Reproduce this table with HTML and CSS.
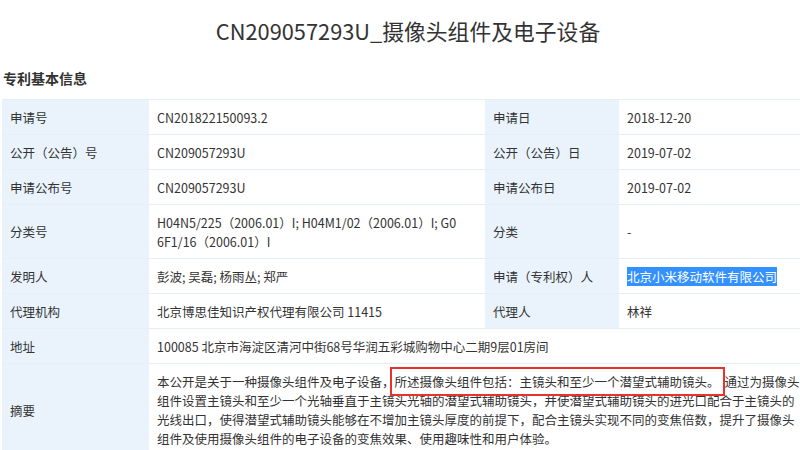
FILE: index.html
```html
<!DOCTYPE html>
<html lang="zh-CN">
<head>
    <meta charset="UTF-8">
    <meta name="viewport" content="width=device-width, initial-scale=1.0">
    <title>CN209057293U_摄像头组件及电子设备</title>
    <link rel="stylesheet" href="styles.css">
</head>
<body>
<div class="page">
    <h1 class="title">CN209057293U_摄像头组件及电子设备</h1>
    <h2 class="section-title">专利基本信息</h2>

    <table class="info-table">
        <colgroup>
            <col class="col-label">
            <col class="col-value">
            <col class="col-label2">
            <col class="col-value2">
        </colgroup>
        <tr>
            <td class="label">申请号</td>
            <td>CN201822150093.2</td>
            <td class="label">申请日</td>
            <td>2018-12-20</td>
        </tr>
        <tr>
            <td class="label">公开（公告）号</td>
            <td>CN209057293U</td>
            <td class="label">公开（公告）日</td>
            <td>2019-07-02</td>
        </tr>
        <tr>
            <td class="label">申请公布号</td>
            <td>CN209057293U</td>
            <td class="label">申请公布日</td>
            <td>2019-07-02</td>
        </tr>
        <tr class="tall">
            <td class="label">分类号</td>
            <td class="breakall">H04N5/225（2006.01）I; H04M1/02（2006.01）I; G06F1/16（2006.01）I</td>
            <td class="label">分类</td>
            <td>-</td>
        </tr>
        <tr>
            <td class="label">发明人</td>
            <td>彭波; 吴磊; 杨雨丛; 郑严</td>
            <td class="label">申请（专利权）人</td>
            <td><span class="selected">北京小米移动软件有限公司</span></td>
        </tr>
        <tr>
            <td class="label">代理机构</td>
            <td>北京博思佳知识产权代理有限公司 11415</td>
            <td class="label">代理人</td>
            <td>林祥</td>
        </tr>
        <tr>
            <td class="label">地址</td>
            <td colspan="3">100085 北京市海淀区清河中街68号华润五彩城购物中心二期9层01房间</td>
        </tr>
        <tr class="abstract">
            <td class="label">摘要</td>
            <td colspan="3">本公开是关于一种摄像头组件及电子设备，<span class="marked">所述摄像头组件包括：主镜头和至少一个潜望式辅助镜头。</span>通过为摄像头组件设置主镜头和至少一个光轴垂直于主镜头光轴的潜望式辅助镜头，并使潜望式辅助镜头的进光口配合于主镜头的光线出口，使得潜望式辅助镜头能够在不增加主镜头厚度的前提下，配合主镜头实现不同的变焦倍数，提升了摄像头组件及使用摄像头组件的电子设备的变焦效果、使用趣味性和用户体验。</td>
        </tr>
    </table>
</div>
</body>
</html>
```

FILE: styles.css
```css
body {
    margin: 0;
    background-color: #fff;
    font-family: "Noto Sans CJK SC", "Microsoft YaHei", sans-serif;
    color: #333;
    overflow: hidden;
}

.page {
    width: 816px;
}

.title {
    margin: 0;
    padding-top: 16px;
    font-size: 21.8px;
    font-weight: normal;
    line-height: 30px;
    text-align: center;
    color: #333;
}

.section-title {
    margin: 22px 0 11px 3px;
    font-size: 14px;
    font-weight: bold;
    line-height: 20px;
    color: #333;
}

.info-table {
    margin-left: 2px;
    width: 812px;
    border-collapse: collapse;
    table-layout: fixed;
}

.col-label { width: 147px; }
.col-value { width: 336px; }
.col-label2 { width: 134px; }
.col-value2 { width: 195px; }

.info-table tr {
    height: 35px;
}

.info-table tr.tall {
    height: 54px;
}

.info-table td {
    border-top: 1px solid #e6eef7;
    border-bottom: 1px solid #e6eef7;
    padding: 0 8px;
    font-size: 12.5px;
    line-height: 19px;
    vertical-align: middle;
    color: #333;
}

.info-table td.label {
    background-color: #eaf3fc;
}

.info-table td.breakall {
    word-break: break-all;
    padding-right: 23px;
}

.abstract td {
    padding-top: 8px;
    padding-bottom: 14px;
}

.selected {
    background-color: #3390ff;
    color: #fff;
}

.marked {
    margin-right: 5px;
    outline: 2px solid #e8322e;
    outline-offset: 3px;
}
```
